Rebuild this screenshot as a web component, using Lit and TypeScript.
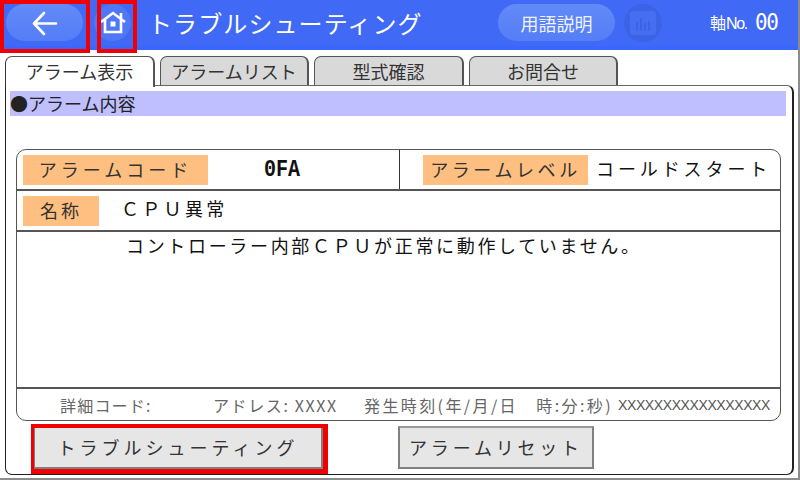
import { css, html, LitElement } from "lit";
import { customElement } from "lit/decorators.js";

const TABS = ["アラーム表示", "アラームリスト", "型式確認", "お問合せ"];

@customElement("app-root")
export default class AppRoot extends LitElement {
  static styles = css`
    :host {
      display: flex;
      flex-direction: column;
      box-sizing: border-box;
      width: 800px;
      height: 480px;
      overflow: hidden;
      background: #fff;
      border-right: 2px solid #8c8c8c;
      border-bottom: 2px solid #8c8c8c;
      color: #222;
      font-family: "Noto Sans CJK JP", "DejaVu Sans", sans-serif;
      font-weight: 400;
    }

    .header {
      display: flex;
      align-items: flex-start;
      flex: none;
      box-sizing: border-box;
      height: 50px;
      padding-top: 4px;
      background: #4069f5;
      border-bottom: 4px solid #3a66fe;
      color: #fff;
    }

    .marked {
      position: relative;
      display: flex;
    }

    .marked::after {
      content: "";
      position: absolute;
      border: 4px solid #f00000;
      box-sizing: border-box;
    }

    .back-mark {
      width: 90px;
      padding-left: 6px;
      box-sizing: border-box;
    }

    .back-mark::after {
      left: 0;
      top: -4px;
      width: 90px;
      height: 53px;
    }

    .home-mark {
      width: 40px;
      margin-left: 7px;
    }

    .home-mark::after {
      left: 0;
      top: -4px;
      width: 40px;
      height: 53px;
    }

    .pill {
      display: flex;
      align-items: center;
      justify-content: center;
      flex: none;
      height: 37px;
      border-radius: 19px;
      background: linear-gradient(#628af8, #557df6);
    }

    .back {
      width: 77px;
    }

    .home {
      width: 37px;
      margin-left: -3px;
      background: #5078f6;
    }

    .title {
      margin-left: 11px;
      width: 350px;
      font-size: 24px;
      line-height: 37px;
      letter-spacing: 1.1px;
      white-space: nowrap;
    }

    .terms {
      width: 117px;
      font-size: 18px;
      color: #eef2ff;
    }

    .chart {
      display: flex;
      align-items: center;
      justify-content: center;
      width: 38px;
      height: 38px;
      margin-left: 9px;
      border-radius: 50%;
      background: #3c62e6;
    }

    .axis {
      display: flex;
      align-items: baseline;
      margin-left: 48px;
      line-height: 37px;
    }

    .axis-label {
      font-size: 16px;
    }

    .axis-no {
      font-family: "Liberation Sans", sans-serif;
      font-size: 16px;
      letter-spacing: -1.3px;
      margin-right: 8px;
    }

    .axis-value {
      font-family: "DejaVu Sans Mono", monospace;
      font-size: 21px;
      letter-spacing: -1.5px;
      transform: scaleY(1.1);
    }

    .tabs {
      display: flex;
      flex: none;
      gap: 5px;
      margin: 6px 0 0 5px;
      height: 29px;
    }

    .tab {
      box-sizing: border-box;
      width: 150px;
      height: 30px;
      border: 1px solid #555;
      border-bottom: none;
      border-right-width: 2px;
      border-radius: 7px 7px 0 0;
      background: #d9d9d9;
      font-size: 18px;
      line-height: 28px;
      text-align: center;
      color: #333;
      white-space: nowrap;
    }

    .tab:nth-child(even) {
      width: 149px;
    }

    .tab.active {
      position: relative;
      z-index: 1;
      height: 31px;
      background: #fff;
      border-left: 1px solid #333;
    }

    .panel {
      display: flex;
      flex-direction: column;
      box-sizing: border-box;
      width: 789px;
      height: 390px;
      margin-left: 5px;
      padding: 5px 6px 0 4px;
      border: 1px solid #222;
      border-top-color: #666;
      border-right-width: 2px;
      border-radius: 0 7px 7px 7px;
    }

    .section {
      flex: none;
      height: 25px;
      background: #bfbfff;
      font-size: 18px;
      line-height: 25px;
      white-space: nowrap;
    }

    .card {
      display: flex;
      flex-direction: column;
      flex: none;
      box-sizing: border-box;
      width: 765px;
      height: 272px;
      margin: 33px 0 0 6px;
      border: 1px solid #555;
      border-radius: 10px;
      color: #111;
    }

    .row {
      display: flex;
      align-items: center;
      flex: none;
      box-sizing: border-box;
      border-bottom: 2px solid #555;
    }

    .row-code {
      height: 41px;
    }

    .row-name {
      height: 41px;
      padding-left: 6px;
    }

    .cell {
      display: flex;
      align-items: center;
      box-sizing: border-box;
      height: 100%;
    }

    .cell-code {
      width: 383px;
      padding-left: 6px;
      border-right: 1px solid #333;
    }

    .cell-level {
      padding-left: 23px;
    }

    .label {
      flex: none;
      box-sizing: border-box;
      height: 30px;
      background: #ffbf80;
      font-size: 18px;
      line-height: 28px;
      text-align: center;
      color: #333;
      white-space: nowrap;
    }

    .label-code {
      width: 185px;
      letter-spacing: 4px;
    }

    .label-level {
      width: 165px;
      letter-spacing: 3.6px;
    }

    .label-name {
      width: 76px;
      letter-spacing: 3px;
    }

    .code-value {
      margin-left: 56px;
      font-family: "Liberation Mono", monospace;
      font-weight: 700;
      font-size: 20px;
      transform: scaleY(1.15);
    }

    .level-value {
      margin: 0 0 4px 8px;
      font-size: 18px;
      letter-spacing: 3.9px;
      white-space: nowrap;
    }

    .name-value {
      margin: 0 0 5px 22px;
      font-size: 18px;
      letter-spacing: 3.3px;
      white-space: nowrap;
    }

    .message {
      flex: 1;
      padding: 0 0 0 109px;
      border-bottom: 2px solid #555;
      font-size: 18px;
      line-height: 26px;
      letter-spacing: 2.67px;
      white-space: nowrap;
    }

    .detail {
      display: flex;
      align-items: center;
      flex: none;
      height: 31px;
      font-size: 16px;
      color: #666;
      white-space: nowrap;
    }

    .detail span {
      flex: none;
    }

    .d-code {
      width: 153px;
      margin-left: 43px;
      letter-spacing: 1.2px;
    }

    .d-addr {
      width: 151px;
      letter-spacing: 1.6px;
    }

    .d-time {
      width: 254px;
      letter-spacing: 2.4px;
    }

    .d-x {
      font-family: "Liberation Sans", sans-serif;
      font-size: 14px;
      letter-spacing: -0.4px;
      color: #555;
    }

    .buttons {
      display: flex;
      flex: none;
      margin: 5px 0 0 10px;
    }

    .btn {
      box-sizing: border-box;
      height: 43px;
      border: 2px solid #808080;
      border-top-color: #9a9a9a;
      background: #e6e6e6;
      font-size: 18px;
      line-height: 39px;
      text-align: center;
      color: #333;
      white-space: nowrap;
    }

    .btn-trouble {
      position: relative;
      width: 290px;
      margin-left: 13px;
      letter-spacing: 4px;
    }

    .btn-trouble::after {
      content: "";
      position: absolute;
      inset: -4px -7px -7px -4px;
      border-style: solid;
      border-color: #f00000;
      border-width: 4px 5px 5px 3px;
    }

    .btn-reset {
      width: 196px;
      margin-left: 75px;
      letter-spacing: 3.8px;
    }
  `;

  render() {
    return html`
      <div class="header">
        <div class="marked back-mark">
          <div class="pill back">
            <svg width="30" height="28" viewBox="0 0 30 28" fill="none" stroke="#fff" stroke-width="2.6" stroke-linecap="round" stroke-linejoin="round">
              <path d="M26 14.5H5M14 4L4 14.5 14 25" />
            </svg>
          </div>
        </div>
        <div class="marked home-mark">
          <div class="pill home">
            <svg width="30" height="30" viewBox="0 0 30 30" fill="none" stroke="#fff" stroke-width="2.6">
              <path d="M3 14L15 5l12 9M7 11v13h16V11" />
              <path d="M23 5v5" />
              <rect x="12.5" y="13.5" width="5" height="5" fill="#fff" stroke="none" />
            </svg>
          </div>
        </div>
        <div class="title">トラブルシューティング</div>
        <div class="pill terms">用語説明</div>
        <div class="chart">
          <svg width="26" height="24" viewBox="0 0 26 24">
            <rect width="26" height="24" rx="3" fill="#466ef0" />
            <path d="M6 11h2v9H6zM10 7h2v13h-2zM14 12h2v8h-2zM18 10h2v10h-2z" fill="#3c62e6" />
          </svg>
        </div>
        <div class="axis">
          <span class="axis-label">軸</span>
          <span class="axis-no">No.</span>
          <span class="axis-value">00</span>
        </div>
      </div>

      <div class="tabs">
        ${TABS.map(
          (t, i) => html`<div class="tab ${i === 0 ? "active" : ""}">${t}</div>`
        )}
      </div>

      <div class="panel">
        <div class="section">●アラーム内容</div>
        <div class="card">
          <div class="row row-code">
            <div class="cell cell-code">
              <div class="label label-code">アラームコード</div>
              <div class="code-value">0FA</div>
            </div>
            <div class="cell cell-level">
              <div class="label label-level">アラームレベル</div>
              <div class="level-value">コールドスタート</div>
            </div>
          </div>
          <div class="row row-name">
            <div class="label label-name">名称</div>
            <div class="name-value">ＣＰＵ異常</div>
          </div>
          <div class="message">コントローラー内部ＣＰＵが正常に動作していません。</div>
          <div class="detail">
            <span class="d-code">詳細コード:</span>
            <span class="d-addr">アドレス: XXXX</span>
            <span class="d-time">発生時刻(年/月/日　時:分:秒)</span>
            <span class="d-x">XXXXXXXXXXXXXXXXX</span>
          </div>
        </div>
        <div class="buttons">
          <div class="btn btn-trouble">トラブルシューティング</div>
          <div class="btn btn-reset">アラームリセット</div>
        </div>
      </div>
    `;
  }
}
